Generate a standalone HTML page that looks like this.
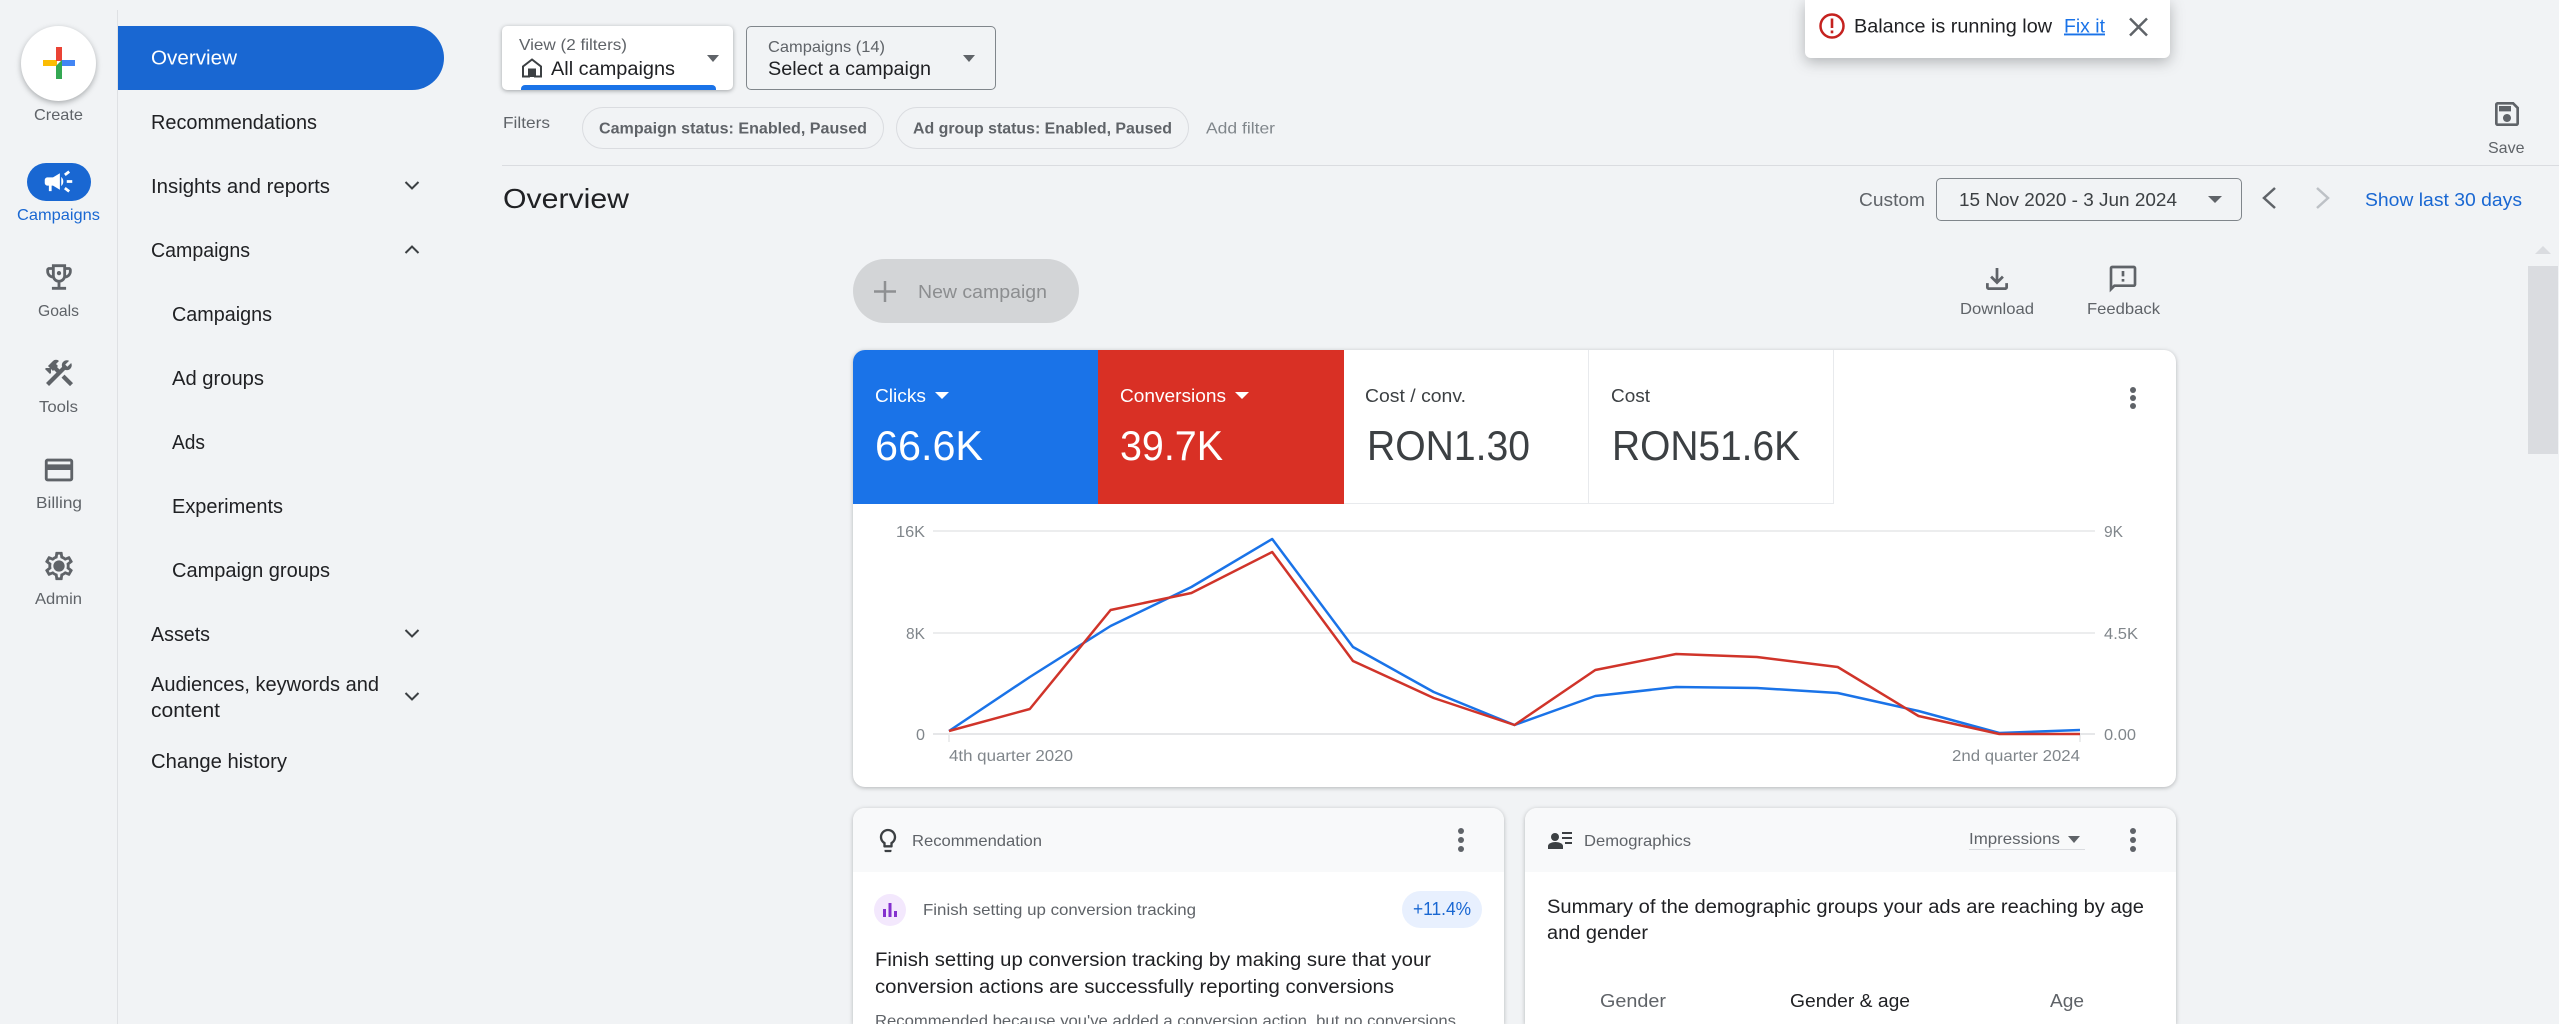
<!DOCTYPE html>
<html lang="en">
<head>
<meta charset="utf-8">
<title>Overview</title>
<style>
html,body{margin:0;padding:0;width:2559px;height:1024px;overflow:hidden;background:#f1f3f5;font-family:"Liberation Sans",sans-serif}
#p{position:relative;width:2559px;height:1024px;overflow:hidden;background:#f1f3f5}
.b{position:absolute;box-sizing:border-box}
svg.l{position:absolute;left:0;top:0}
text{font-family:"Liberation Sans",sans-serif;fill:#202124}
.n{font-size:20px;fill:#202124}
.r{font-size:16px;fill:#5f6368}
.g{font-size:16px;fill:#5f6368}
.m{font-size:19px;fill:#202124}
.a{font-size:16px;fill:#80868b}
.big{font-size:42px;fill:#3c4043}
</style>
</head>
<body>
<div id="p">
<div class="b" style="left:116.500px;top:10px;width:1.500px;height:1014px;background:#dfe1e4"></div>
<div class="b" style="left:118px;top:26px;width:326px;height:64px;background:#1967d2;border-radius:0 32px 32px 0"></div>
<div class="b" style="left:21px;top:26px;width:75px;height:75px;border-radius:50%;background:#fff;box-shadow:0 2px 6px rgba(60,64,67,.4)"></div>
<div class="b" style="left:27px;top:163px;width:64px;height:38px;border-radius:19px;background:#1967d2"></div>

<div class="b" style="left:502px;top:26px;width:231px;height:64px;background:#fff;border-radius:5px;box-shadow:0 1px 4px rgba(60,64,67,.45);overflow:hidden"><div class="b" style="left:19px;top:59px;width:195px;height:8px;background:#1a73e8;border-radius:4px 4px 0 0"></div></div>
<div class="b" style="left:746px;top:26px;width:250px;height:64px;border:1px solid #80868b;border-radius:5px"></div>
<div class="b" style="left:582px;top:107px;width:302px;height:42px;border:1px solid #dadce0;border-radius:21px"></div>
<div class="b" style="left:896px;top:107px;width:293px;height:42px;border:1px solid #dadce0;border-radius:21px"></div>
<div class="b" style="left:502px;top:165px;width:2057px;height:1px;background:#dadce0"></div>
<div class="b" style="left:1936px;top:178px;width:306px;height:43px;border:1px solid #80868b;border-radius:5px"></div>
<div class="b" style="left:853px;top:259px;width:226px;height:64px;border-radius:32px;background:#d3d5d7"></div>
<div class="b" style="left:2528px;top:266px;width:30px;height:188px;background:#dadce0"></div>

<div class="b" style="left:1805px;top:0;width:365px;height:58px;background:#fff;border-radius:0 0 6px 6px;box-shadow:0 4px 14px rgba(60,64,67,.35)"></div>

<div class="b" style="left:853px;top:350px;width:1323px;height:437px;background:#fff;border-radius:12px;box-shadow:0 1px 4px rgba(60,64,67,.35);overflow:hidden">
  <div class="b" style="left:0;top:0;width:245px;height:154px;background:#1a73e8"></div>
  <div class="b" style="left:245px;top:0;width:246px;height:154px;background:#d93025"></div>
  <div class="b" style="left:491px;top:0;width:245px;height:154px;border-right:1px solid #e8eaed;border-bottom:1px solid #e8eaed"></div>
  <div class="b" style="left:736px;top:0;width:245px;height:154px;border-right:1px solid #e8eaed;border-bottom:1px solid #e8eaed"></div>
</div>

<div class="b" style="left:853px;top:808px;width:651px;height:216px;background:#fff;border-radius:12px 12px 0 0;box-shadow:0 1px 4px rgba(60,64,67,.35);overflow:hidden">
  <div class="b" style="left:0;top:0;width:651px;height:64px;background:#f8f9fa"></div>
</div>
<div class="b" style="left:1525px;top:808px;width:651px;height:216px;background:#fff;border-radius:12px 12px 0 0;box-shadow:0 1px 4px rgba(60,64,67,.35);overflow:hidden">
  <div class="b" style="left:0;top:0;width:651px;height:64px;background:#f8f9fa"></div>
</div>
<div class="b" style="left:874px;top:894px;width:32px;height:32px;border-radius:50%;background:#f3e8fd"></div>
<div class="b" style="left:1402px;top:891px;width:80px;height:37px;border-radius:18.500px;background:#e8f0fe"></div>
<div class="b" style="left:1969px;top:848.500px;width:116px;height:1.500px;background:#dadce0"></div>

<svg class="l" width="2559" height="1024" viewBox="0 0 2559 1024" xmlns="http://www.w3.org/2000/svg">
<!-- create plus -->
<rect x="43" y="60" width="14" height="6" fill="#fbbc04"/>
<rect x="56" y="47" width="6" height="14" fill="#ea4335"/>
<path d="M62 60h13v6H56z" fill="#4285f4"/>
<path d="M56 66l6-6v19h-6z" fill="#34a853"/>
<!-- rail labels -->
<text class="r" x="34" y="120" textLength="49" lengthAdjust="spacingAndGlyphs">Create</text>
<text class="r" x="17" y="220" textLength="83" lengthAdjust="spacingAndGlyphs" style="fill:#1967d2">Campaigns</text>
<text class="r" x="38" y="316" textLength="41" lengthAdjust="spacingAndGlyphs">Goals</text>
<text class="r" x="39" y="412" textLength="39" lengthAdjust="spacingAndGlyphs">Tools</text>
<text class="r" x="36" y="508" textLength="46" lengthAdjust="spacingAndGlyphs">Billing</text>
<text class="r" x="35" y="604" textLength="47" lengthAdjust="spacingAndGlyphs">Admin</text>
<!-- rail icons -->
<svg x="42" y="165" width="33" height="33" viewBox="0 0 24 24"><path fill="#fff" d="M18 11v2h4v-2h-4zm-2 6.610c.96.71 2.210 1.650 3.200 2.390.4-.53.8-1.070 1.200-1.600-.99-.74-2.240-1.680-3.200-2.400-.4.54-.8 1.080-1.200 1.610zM20.400 5.600c-.4-.53-.8-1.070-1.200-1.600-.99.74-2.240 1.680-3.200 2.400.4.53.8 1.070 1.200 1.600.96-.72 2.210-1.650 3.200-2.400zM4 9c-1.100 0-2 .9-2 2v2c0 1.100.9 2 2 2h1v4h2v-4h1l5 3V6L8 9H4zm11.500 3c0-1.330-.58-2.530-1.500-3.350v6.690c.92-.81 1.500-2.010 1.500-3.340z"/></svg>
<svg x="42" y="260" width="34" height="34" viewBox="0 0 24 24"><path fill="#5f6368" d="M19 5h-2V3H7v2H5c-1.100 0-2 .9-2 2v1c0 2.550 1.920 4.630 4.390 4.940.63 1.500 1.980 2.630 3.610 2.960V19H7v2h10v-2h-4v-3.100c1.630-.33 2.980-1.460 3.610-2.960C19.080 12.630 21 10.550 21 8V7c0-1.100-.9-2-2-2zM5 8V7h2v3.820C5.840 10.400 5 9.300 5 8zm7 6c-1.650 0-3-1.350-3-3V5h6v6c0 1.650-1.350 3-3 3zm7-6c0 1.300-.84 2.400-2 2.820V7h2v1z"/><circle cx="12" cy="9.300" r="1.500" fill="#5f6368"/></svg>
<svg x="42" y="356" width="34" height="34" viewBox="0 0 24 24"><path fill="#5f6368" d="M13.780 15.300l6 6 2.110-2.160-6-6zM17.500 10c1.930 0 3.500-1.570 3.500-3.500 0-.58-.16-1.120-.41-1.600l-2.700 2.700-1.490-1.490 2.700-2.700c-.48-.25-1.020-.41-1.600-.41C15.570 3 14 4.570 14 6.500c0 .41.08.8.21 1.160l-1.850 1.850-1.780-1.780.71-.71-1.410-1.410L12 3.490c-1.170-1.170-3.070-1.170-4.240 0L4.220 7.030l1.410 1.410H2.810l-.71.71 3.540 3.540.71-.71V9.150l1.410 1.410.71-.71 1.780 1.780-7.410 7.410 2.120 2.120L16.340 9.790c.36.13.75.21 1.160.21z"/></svg>
<svg x="42" y="453" width="34" height="34" viewBox="0 0 24 24"><path fill="#5f6368" d="M20 4H4c-1.110 0-1.990.89-1.990 2L2 18c0 1.110.89 2 2 2h16c1.110 0 2-.89 2-2V6c0-1.110-.89-2-2-2zm0 14H4v-6h16v6zm0-10H4V6h16v2z"/></svg>
<svg x="42" y="549" width="34" height="34" viewBox="0 0 24 24"><path fill="#5f6368" d="M19.430 12.980c.04-.32.07-.64.07-.98 0-.34-.03-.66-.07-.98l2.110-1.650c.19-.15.24-.42.12-.64l-2-3.460c-.09-.16-.26-.25-.44-.25-.06 0-.12.01-.17.03l-2.490 1c-.52-.4-1.080-.73-1.690-.98l-.38-2.650C14.460 2.180 14.250 2 14 2h-4c-.25 0-.46.18-.49.42l-.38 2.650c-.61.25-1.170.59-1.690.98l-2.490-1c-.06-.02-.12-.03-.18-.03-.17 0-.34.09-.43.25l-2 3.460c-.13.22-.07.49.12.64l2.110 1.650c-.04.32-.07.65-.07.98 0 .33.03.66.07.98l-2.110 1.650c-.19.15-.24.42-.12.64l2 3.460c.09.16.26.25.44.25.06 0 .12-.01.17-.03l2.490-1c.52.4 1.080.73 1.690.98l.38 2.650c.03.24.24.42.49.42h4c.25 0 .46-.18.49-.42l.38-2.650c.61-.25 1.170-.59 1.690-.98l2.490 1c.06.02.12.03.18.03.17 0 .34-.09.43-.25l2-3.460c.12-.22.07-.49-.12-.64l-2.110-1.650zm-1.980-1.710c.04.31.05.52.05.73 0 .21-.02.43-.05.73l-.14 1.130.89.7 1.080.84-.7 1.210-1.270-.51-1.040-.42-.9.68c-.43.32-.84.56-1.250.73l-1.060.43-.16 1.130-.2 1.350h-1.400l-.19-1.350-.16-1.130-1.060-.43c-.43-.18-.83-.41-1.230-.71l-.91-.7-1.060.43-1.270.51-.7-1.210 1.080-.84.89-.7-.14-1.130c-.03-.31-.05-.54-.05-.74s.02-.43.05-.73l.14-1.130-.89-.7-1.080-.84.7-1.210 1.270.51 1.040.42.9-.68c.43-.32.84-.56 1.250-.73l1.060-.43.16-1.130.2-1.350h1.390l.19 1.350.16 1.130 1.060.43c.43.18.83.41 1.230.71l.91.7 1.060-.43 1.270-.51.7 1.210-1.070.85-.89.7.14 1.130zM12 8c-2.210 0-4 1.790-4 4s1.790 4 4 4 4-1.790 4-4-1.790-4-4-4z"/></svg>
<!-- nav -->
<text class="n" x="151" y="64.500" textLength="86" lengthAdjust="spacingAndGlyphs" style="fill:#fff">Overview</text>
<text class="n" x="151" y="129" textLength="166" lengthAdjust="spacingAndGlyphs">Recommendations</text>
<text class="n" x="151" y="193" textLength="179" lengthAdjust="spacingAndGlyphs">Insights and reports</text>
<text class="n" x="151" y="257" textLength="99" lengthAdjust="spacingAndGlyphs">Campaigns</text>
<text class="n" x="172" y="321" textLength="100" lengthAdjust="spacingAndGlyphs">Campaigns</text>
<text class="n" x="172" y="385" textLength="92" lengthAdjust="spacingAndGlyphs">Ad groups</text>
<text class="n" x="172" y="449" textLength="33" lengthAdjust="spacingAndGlyphs">Ads</text>
<text class="n" x="172" y="513" textLength="111" lengthAdjust="spacingAndGlyphs">Experiments</text>
<text class="n" x="172" y="577" textLength="158" lengthAdjust="spacingAndGlyphs">Campaign groups</text>
<text class="n" x="151" y="641" textLength="59" lengthAdjust="spacingAndGlyphs">Assets</text>
<text class="n" x="151" y="691" textLength="228" lengthAdjust="spacingAndGlyphs">Audiences, keywords and</text>
<text class="n" x="151" y="717" textLength="69" lengthAdjust="spacingAndGlyphs">content</text>
<text class="n" x="151" y="768" textLength="136" lengthAdjust="spacingAndGlyphs">Change history</text>
<g fill="none" stroke="#3c4043" stroke-width="2">
<path d="M405.500 182l6.500 6.500 6.500-6.500"/>
<path d="M405.500 253l6.500-6.500 6.500 6.500"/>
<path d="M405.500 630l6.500 6.500 6.500-6.500"/>
<path d="M405.500 693l6.500 6.500 6.500-6.500"/>
</g>
<!-- top selectors -->
<text class="g" x="519" y="50" textLength="108" lengthAdjust="spacingAndGlyphs">View (2 filters)</text>
<path d="M532 59.500l-9 7v10h6v-7h6v7h6v-10z" fill="none" stroke="#3c4043" stroke-width="2"/>
<rect x="529" y="69" width="6" height="8" fill="#3c4043"/>
<text class="m" x="551" y="75" textLength="124" lengthAdjust="spacingAndGlyphs">All campaigns</text>
<path d="M707 55h12l-6 7z" fill="#5f6368"/>
<text class="g" x="768" y="52" textLength="117" lengthAdjust="spacingAndGlyphs">Campaigns (14)</text>
<text class="m" x="768" y="75" textLength="163" lengthAdjust="spacingAndGlyphs">Select a campaign</text>
<path d="M963 55h12l-6 7z" fill="#5f6368"/>
<text class="g" x="503" y="128" textLength="47" lengthAdjust="spacingAndGlyphs">Filters</text>
<text class="g" x="599" y="133.500" textLength="268" lengthAdjust="spacingAndGlyphs" font-weight="700" style="fill:#5f6368">Campaign status: Enabled, Paused</text>
<text class="g" x="913" y="133.500" textLength="259" lengthAdjust="spacingAndGlyphs" font-weight="700" style="fill:#5f6368">Ad group status: Enabled, Paused</text>
<text class="a" x="1206" y="133.500" textLength="69" lengthAdjust="spacingAndGlyphs">Add filter</text>
<text x="503" y="208" font-size="28" textLength="126" lengthAdjust="spacingAndGlyphs">Overview</text>
<!-- new campaign -->
<path d="M885 281v21M874 291.500h22" stroke="#8e9092" stroke-width="2.500" fill="none"/>
<text x="918" y="298" font-size="18" textLength="129" lengthAdjust="spacingAndGlyphs" style="fill:#8c8e90">New campaign</text>
<!-- toast -->
<circle cx="1832" cy="26" r="11.500" fill="none" stroke="#c5221f" stroke-width="2.500"/>
<rect x="1830.700" y="18.500" width="2.600" height="9.500" fill="#c5221f"/>
<rect x="1830.700" y="30.500" width="2.600" height="2.800" fill="#c5221f"/>
<text class="m" x="1854" y="32.500" textLength="198" lengthAdjust="spacingAndGlyphs">Balance is running low</text>
<text class="m" x="2064" y="32.500" textLength="41" lengthAdjust="spacingAndGlyphs" style="fill:#1a73e8" text-decoration="underline">Fix it</text>
<path d="M2130 18.500l17 17M2147 18.500l-17 17" stroke="#5f6368" stroke-width="2.500" fill="none"/>
<!-- save -->
<svg x="2491" y="98" width="32" height="32" viewBox="0 0 24 24"><path fill="#5f6368" d="M17 3H5c-1.110 0-2 .9-2 2v14c0 1.100.89 2 2 2h14c1.100 0 2-.9 2-2V7l-4-4zm2 16H5V5h11.170L19 7.830V19zm-7-7c-1.660 0-3 1.340-3 3s1.340 3 3 3 3-1.340 3-3-1.340-3-3-3zM6 6h9v4H6z"/></svg>
<text class="g" x="2488" y="153" textLength="36.500" lengthAdjust="spacingAndGlyphs">Save</text>
<!-- date -->
<text x="1859" y="206" font-size="18" textLength="66" lengthAdjust="spacingAndGlyphs" style="fill:#5f6368">Custom</text>
<text x="1959" y="206" font-size="18" textLength="218" lengthAdjust="spacingAndGlyphs" style="fill:#3c4043">15 Nov 2020 - 3 Jun 2024</text>
<path d="M2208 196h14l-7 7z" fill="#5f6368"/>
<path d="M2275 188l-11 10 11 10" fill="none" stroke="#5f6368" stroke-width="2.500"/>
<path d="M2317 188l11 10-11 10" fill="none" stroke="#bdc1c6" stroke-width="2.500"/>
<text x="2365" y="206" font-size="18" textLength="157" lengthAdjust="spacingAndGlyphs" style="fill:#1967d2">Show last 30 days</text>
<path d="M2535 254l8-8 8 8z" fill="#dadce0"/>
<!-- download / feedback -->
<svg x="1980.500" y="262.500" width="33" height="33" viewBox="0 0 24 24"><path fill="#5f6368" d="M18 15v3H6v-3H4v3c0 1.100.9 2 2 2h12c1.100 0 2-.9 2-2v-3h-2zm-1-4l-1.410-1.410L13 12.170V4h-2v8.170L8.410 9.590 7 11l5 5 5-5z"/></svg>
<text class="g" x="1960" y="314" textLength="74" lengthAdjust="spacingAndGlyphs">Download</text>
<svg x="2107" y="263" width="32" height="32" viewBox="0 0 24 24"><path fill="#5f6368" d="M20 2H4c-1.100 0-1.990.9-1.990 2L2 22l4-4h14c1.100 0 2-.9 2-2V4c0-1.100-.9-2-2-2zm0 14H5.170L4 17.170V4h16v12zM11 12h2v2h-2zm0-6h2v4h-2z"/></svg>
<text class="g" x="2087" y="314" textLength="73" lengthAdjust="spacingAndGlyphs">Feedback</text>
<!-- score tiles -->
<text x="875" y="402" font-size="18" textLength="51" lengthAdjust="spacingAndGlyphs" style="fill:#fff">Clicks</text>
<path d="M935 392h14l-7 7z" fill="#fff"/>
<text x="875" y="460" font-size="42" textLength="108" lengthAdjust="spacingAndGlyphs" style="fill:#fff">66.6K</text>
<text x="1120" y="402" font-size="18" textLength="106" lengthAdjust="spacingAndGlyphs" style="fill:#fff">Conversions</text>
<path d="M1235 392h14l-7 7z" fill="#fff"/>
<text x="1120" y="460" font-size="42" textLength="103" lengthAdjust="spacingAndGlyphs" style="fill:#fff">39.7K</text>
<text x="1365" y="402" font-size="18" textLength="101" lengthAdjust="spacingAndGlyphs" style="fill:#3c4043">Cost / conv.</text>
<text class="big" x="1367" y="460" textLength="163" lengthAdjust="spacingAndGlyphs">RON1.30</text>
<text x="1611" y="402" font-size="18" textLength="39" lengthAdjust="spacingAndGlyphs" style="fill:#3c4043">Cost</text>
<text class="big" x="1612" y="460" textLength="188" lengthAdjust="spacingAndGlyphs">RON51.6K</text>
<circle cx="2133" cy="390" r="3" fill="#5f6368"/><circle cx="2133" cy="398" r="3" fill="#5f6368"/><circle cx="2133" cy="406" r="3" fill="#5f6368"/>
<!-- chart -->
<g stroke="#e6e7e9" stroke-width="1.500" fill="none">
<path d="M933 531H2095M933 633H2095"/>
<path d="M933 734H2095" stroke-width="2"/>
<path d="M949 734v8M2080 734v8"/>
</g>
<text class="a" x="896" y="537" textLength="29" lengthAdjust="spacingAndGlyphs">16K</text>
<text class="a" x="906" y="639" textLength="19" lengthAdjust="spacingAndGlyphs">8K</text>
<text class="a" x="916" y="740" textLength="9" lengthAdjust="spacingAndGlyphs">0</text>
<text class="a" x="2104" y="537" textLength="19" lengthAdjust="spacingAndGlyphs">9K</text>
<text class="a" x="2104" y="639" textLength="34" lengthAdjust="spacingAndGlyphs">4.5K</text>
<text class="a" x="2104" y="740" textLength="32" lengthAdjust="spacingAndGlyphs">0.00</text>
<text class="a" x="949" y="761" textLength="124" lengthAdjust="spacingAndGlyphs">4th quarter 2020</text>
<text class="a" x="1952" y="761" textLength="128" lengthAdjust="spacingAndGlyphs">2nd quarter 2024</text>
<polyline fill="none" stroke="#1a73e8" stroke-width="2.500" stroke-linejoin="round" points="949,731 1029.800,677 1110.600,626 1191.400,587 1272.200,539 1353,647 1433.700,692 1514.500,725 1595.300,696 1676.100,687 1756.900,688 1837.700,693 1918.500,711 1999.300,733 2080,730"/>
<polyline fill="none" stroke="#d0342a" stroke-width="2.500" stroke-linejoin="round" points="949,731 1029.800,709 1110.600,610 1191.400,593 1272.200,552 1353,661 1433.700,698 1514.500,725 1595.300,670 1676.100,654 1756.900,657 1837.700,667 1918.500,716 1999.300,734 2080,734"/>
<!-- recommendation card -->
<svg x="874" y="826.500" width="28" height="28" viewBox="0 0 24 24"><path fill="#3c4043" d="M9 21c0 .55.45 1 1 1h4c.55 0 1-.45 1-1v-1H9v1zm3-19C8.140 2 5 5.140 5 9c0 2.380 1.190 4.470 3 5.740V17c0 .55.45 1 1 1h6c.55 0 1-.45 1-1v-2.260c1.810-1.270 3-3.360 3-5.740 0-3.860-3.140-7-7-7zm2.850 11.100l-.85.6V16h-4v-2.300l-.85-.6C7.800 12.160 7 10.630 7 9c0-2.760 2.240-5 5-5s5 2.240 5 5c0 1.630-.8 3.160-2.150 4.100z"/></svg>
<text class="g" x="912" y="846" textLength="130" lengthAdjust="spacingAndGlyphs">Recommendation</text>
<circle cx="1461" cy="831" r="3" fill="#5f6368"/><circle cx="1461" cy="840" r="3" fill="#5f6368"/><circle cx="1461" cy="849" r="3" fill="#5f6368"/>
<rect x="883" y="909" width="3" height="8" fill="#8430ce"/><rect x="888.500" y="903" width="3" height="14" fill="#8430ce"/><rect x="894" y="911" width="3" height="6" fill="#8430ce"/>
<text class="g" x="923" y="915" textLength="273" lengthAdjust="spacingAndGlyphs">Finish setting up conversion tracking</text>
<text x="1413" y="915" font-size="18" textLength="58" lengthAdjust="spacingAndGlyphs" style="fill:#1967d2">+11.4%</text>
<text class="m" x="875" y="966" textLength="556" lengthAdjust="spacingAndGlyphs">Finish setting up conversion tracking by making sure that your</text>
<text class="m" x="875" y="993" textLength="519" lengthAdjust="spacingAndGlyphs">conversion actions are successfully reporting conversions</text>
<text class="g" x="875" y="1026" textLength="581" lengthAdjust="spacingAndGlyphs">Recommended because you've added a conversion action, but no conversions</text>
<!-- demographics card -->
<circle cx="1555" cy="837" r="4" fill="#3c4043"/>
<path d="M1548 849v-3c0-2.500 4-4 7.500-4s7.500 1.500 7.500 4v3z" fill="#3c4043"/>
<path d="M1562 833h10M1562 838h10M1565 843h7" stroke="#3c4043" stroke-width="2" fill="none"/>
<text class="g" x="1584" y="846" textLength="107" lengthAdjust="spacingAndGlyphs">Demographics</text>
<text class="g" x="1969" y="844" textLength="91" lengthAdjust="spacingAndGlyphs">Impressions</text>
<path d="M2068 836h12l-6 7z" fill="#5f6368"/>
<circle cx="2133" cy="831" r="3" fill="#5f6368"/><circle cx="2133" cy="840" r="3" fill="#5f6368"/><circle cx="2133" cy="849" r="3" fill="#5f6368"/>
<text class="m" x="1547" y="913" textLength="597" lengthAdjust="spacingAndGlyphs">Summary of the demographic groups your ads are reaching by age</text>
<text class="m" x="1547" y="939" textLength="101" lengthAdjust="spacingAndGlyphs">and gender</text>
<text x="1600" y="1007" font-size="18" textLength="66" lengthAdjust="spacingAndGlyphs" style="fill:#5f6368">Gender</text>
<text x="1790" y="1007" font-size="18" textLength="120" lengthAdjust="spacingAndGlyphs">Gender &amp; age</text>
<text x="2050" y="1007" font-size="18" textLength="34" lengthAdjust="spacingAndGlyphs" style="fill:#5f6368">Age</text>
</svg>
</div>
</body>
</html>
